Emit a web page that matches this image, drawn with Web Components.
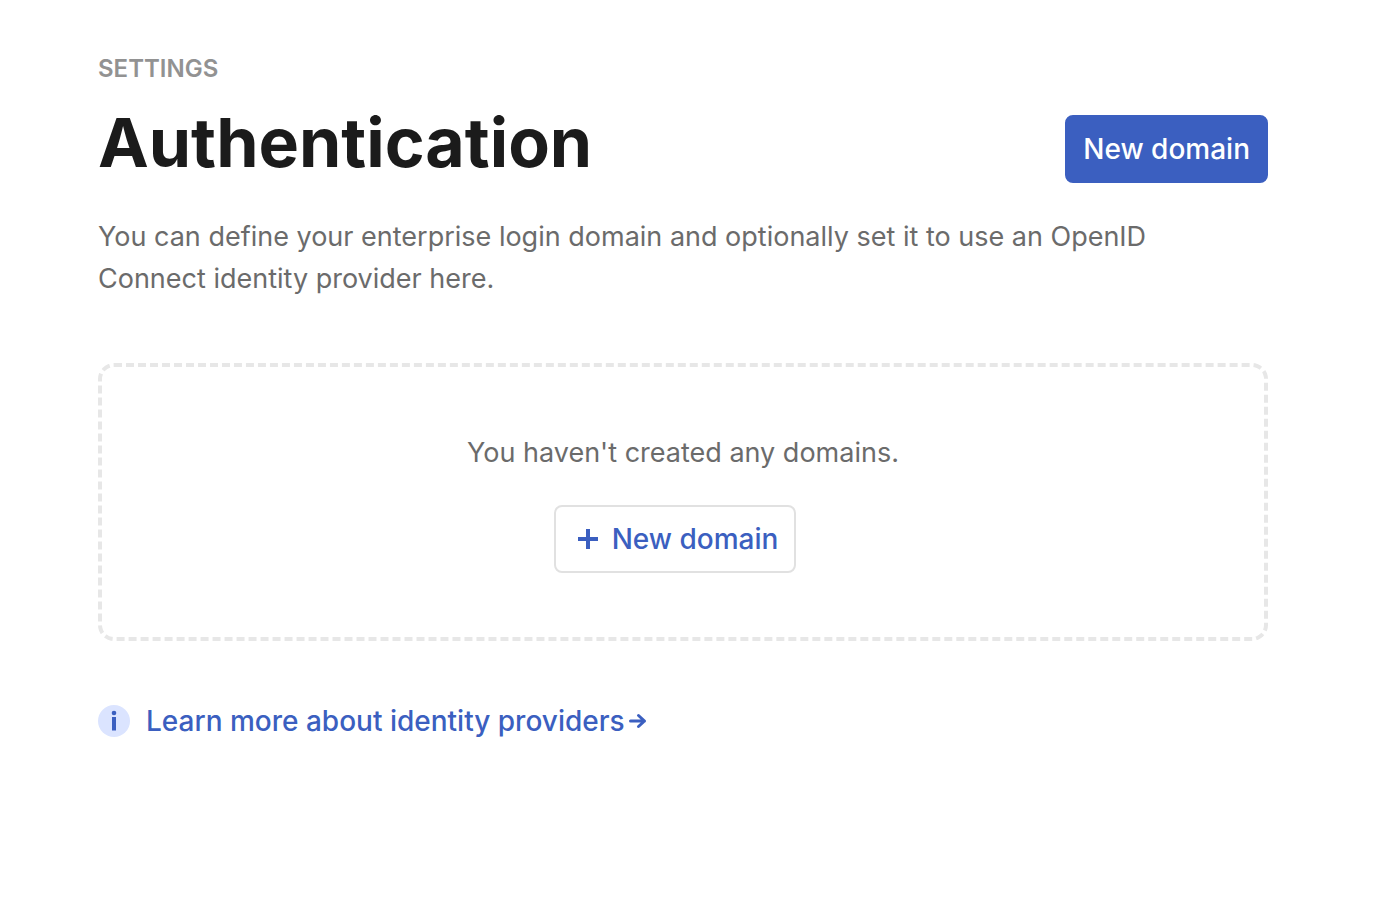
<!DOCTYPE html>
<html lang="en">
<head>
<meta charset="utf-8">
<title>Authentication settings</title>
<style>
  body { margin: 0; background: #fff; font-family: Inter, "Liberation Sans", sans-serif; color: #6b6b6b; }
</style>
</head>
<body>
<settings-page>
  <page-header>
    <span slot="eyebrow">SETTINGS</span>
    <span slot="title">Authentication</span>
    <ui-button slot="action" variant="primary">New domain</ui-button>
    <span slot="description">You can define your enterprise login domain and optionally set it to use an OpenID Connect identity provider here.</span>
  </page-header>
  <empty-state>
    You haven't created any domains.
    <ui-button slot="action" variant="outline" icon="plus">New domain</ui-button>
  </empty-state>
  <info-link href="#identity-providers">Learn more about identity providers</info-link>
</settings-page>

<script>
  function define(name, html, setup) {
    customElements.define(name, class extends HTMLElement {
      constructor() {
        super();
        this.attachShadow({ mode: "open" }).innerHTML = html;
      }
      connectedCallback() { if (setup) setup(this, this.shadowRoot); }
    });
  }

  define("settings-page", `
    <style>
      :host { display: block; padding: 54px 116px 54px 98px; }
    </style>
    <main><slot></slot></main>`);

  define("page-header", `
    <style>
      :host { display: block; }
      .eyebrow { margin: 0; font-size: 24px; line-height: 30px; font-weight: 600; color: #929292; }
      .row { display: flex; justify-content: space-between; align-items: flex-start; gap: 32px; padding-top: 14px; }
      h1 { margin: 0; font-size: 68px; line-height: 88px; font-weight: 700; color: #1b1b1b; }
      .action { padding-top: 17px; }
      .description { margin: 30px 0 0; max-width: 1100px; font-size: 27px; line-height: 42px; }
    </style>
    <header>
      <p class="eyebrow"><slot name="eyebrow"></slot></p>
      <div class="row">
        <h1><slot name="title"></slot></h1>
        <div class="action"><slot name="action"></slot></div>
      </div>
      <p class="description"><slot name="description"></slot></p>
    </header>`);

  define("ui-button", `
    <style>
      :host { display: inline-block; vertical-align: top; }
      button { display: flex; align-items: center; gap: 14px; box-sizing: border-box; height: 68px; margin: 0;
        padding: 0 16px; border: 2px solid #3b5fc0; border-radius: 8px; background: #3b5fc0; color: #fff;
        font: 500 28px/40px Inter, "Liberation Sans", sans-serif; white-space: nowrap; cursor: pointer; }
      svg { display: none; width: 20px; height: 20px; }
      :host([variant="outline"]) button { background: #fff; border-color: #e1e1e1; color: #3b5fc0; }
      :host([icon="plus"]) button { padding-left: 22px; }
      :host([icon="plus"]) svg { display: block; }
    </style>
    <button type="button">
      <svg viewBox="0 0 20 20" aria-hidden="true"><path d="M8 0h4v8h8v4h-8v8H8v-8H0V8h8z" fill="currentColor"/></svg>
      <slot></slot>
    </button>`);

  define("empty-state", `
    <style>
      :host { display: block; margin-top: 63px; }
      section { padding: 65px 32px 64px; border: 4px dashed #e7e7e7; border-radius: 16px; text-align: center; }
      p { margin: 0; font-size: 27px; line-height: 42px; }
      .action { display: flex; justify-content: center; margin: 31px 16px 0 0; }
    </style>
    <section>
      <p><slot></slot></p>
      <div class="action"><slot name="action"></slot></div>
    </section>`);

  define("info-link", `
    <style>
      :host { display: block; margin-top: 60px; }
      a { display: inline-flex; align-items: center; color: #3b5fc0; text-decoration: none;
        font-size: 28px; line-height: 40px; font-weight: 500; }
      .info { width: 32px; height: 32px; margin-right: 16px; }
      .arrow { width: 18px; height: 18px; margin-left: 4px; }
    </style>
    <a>
      <svg class="info" viewBox="0 0 32 32" aria-hidden="true">
        <circle cx="16" cy="16" r="16" fill="#dbe4ff"/>
        <circle cx="16" cy="8" r="2.3" fill="currentColor"/>
        <path d="M14 12h4v13.500h-4z" fill="currentColor"/>
      </svg>
      <slot></slot>
      <svg class="arrow" viewBox="0 0 18 18" aria-hidden="true"><path d="M1.500 9h14M9.500 3.500l6 5.500-6 5.500" fill="none" stroke="currentColor" stroke-width="3" stroke-linejoin="round" stroke-linecap="round"/></svg>
    </a>`, (host, root) => root.querySelector("a").href = host.getAttribute("href"));
</script>
</body>
</html>
